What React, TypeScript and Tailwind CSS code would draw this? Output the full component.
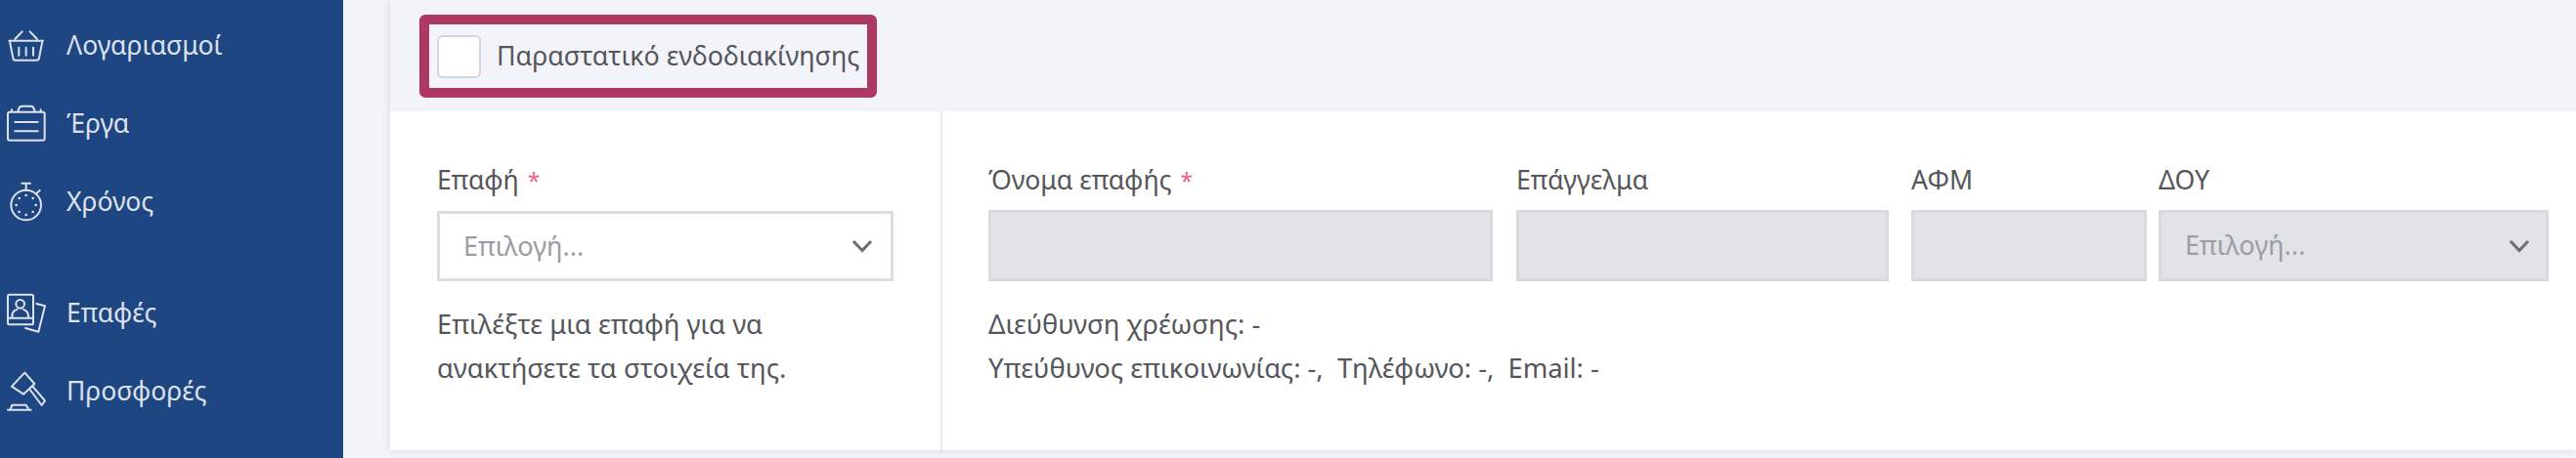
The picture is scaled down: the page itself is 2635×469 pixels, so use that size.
import React from "react";

const font = "font-['Noto_Sans','Open_Sans',sans-serif]";

const ChevronDown: React.FC = () => (
  <svg width="22" height="14" viewBox="0 0 22 14" fill="none" stroke="#6b6d72" strokeWidth="3">
    <path d="M2 2 L11 11.5 L20 2" />
  </svg>
);

const BasketIcon = () => (
  <svg className="w-[50px] h-[40px] overflow-visible" viewBox="0 78 150 120" fill="none" stroke="#dde2ec" strokeWidth="6" strokeLinecap="round" strokeLinejoin="round">
    <path d="M28 125 H132" />
    <path d="M30 127 L40 178 Q41 185 48 185 H112 Q119 185 120 178 L130 127" />
    <path d="M46 120 L68 97 M114 120 L92 97" />
    <path d="M58 146 V170 M80 146 V170 M102 146 V170" />
  </svg>
);

const BriefcaseIcon = () => (
  <svg className="w-[50px] h-[40px] overflow-visible" viewBox="0 321 150 120" fill="none" stroke="#dde2ec" strokeWidth="6" strokeLinecap="round" strokeLinejoin="round">
    <rect x="24" y="347" width="113" height="87" rx="6" />
    <path d="M55 346 L58 336 Q60 329 69 329 H93 Q102 329 104 336 L107 346" />
    <path d="M36 346 V340 M125 346 V340" />
    <path d="M46 378 H116 M46 406 H116" />
  </svg>
);

const StopwatchIcon = () => (
  <svg className="w-[50px] h-[40px] overflow-visible" viewBox="0 560 150 120" fill="none" stroke="#dde2ec" strokeWidth="6" strokeLinecap="round" strokeLinejoin="round">
    <circle cx="80" cy="632" r="46" />
    <path d="M67 565 H93 M80 565 V586 M110 598 L122 587" />
    <g fill="#dde2ec" stroke="none">
      <circle cx="80" cy="602" r="4" />
      <circle cx="101" cy="611" r="4" />
      <circle cx="110" cy="632" r="4" />
      <circle cx="101" cy="653" r="4" />
      <circle cx="80" cy="662" r="4" />
      <circle cx="59" cy="653" r="4" />
      <circle cx="50" cy="632" r="4" />
      <circle cx="59" cy="611" r="4" />
    </g>
  </svg>
);

const ContactsIcon = () => (
  <svg className="w-[50px] h-[40px] overflow-visible" viewBox="0 185 150 120" fill="none" stroke="#dde2ec" strokeWidth="6" strokeLinecap="round" strokeLinejoin="round">
    <rect x="24" y="190" width="78" height="92" rx="5" />
    <path d="M24 262 H102" />
    <circle cx="62" cy="219" r="13" />
    <path d="M37 260 Q36 240 52 236 M87 260 Q88 240 72 236" />
    <path d="M112 218 L138 225 L118 304 L78 293" />
  </svg>
);

const GavelIcon = () => (
  <svg className="w-[50px] h-[40px] overflow-visible" viewBox="0 427 150 120" fill="none" stroke="#dde2ec" strokeWidth="6" strokeLinecap="round" strokeLinejoin="round">
    <path d="M76 432 L106 466 L72 498 L36 474 Z" />
    <path d="M92 484 L128 532 L138 518 L100 474" />
    <path d="M24 546 H95 M32 545 L37 531 H80 L88 545" />
  </svg>
);

const TagIcon = () => (
  <svg className="w-[50px] h-[40px] overflow-visible" viewBox="0 605 150 120" fill="none" stroke="#dde2ec" strokeWidth="6" strokeLinecap="round" strokeLinejoin="round">
    <path d="M60 689 L96 672 L110 688" />
  </svg>
);

const NavItem: React.FC<{ icon: React.ReactNode; label?: string }> = ({ icon, label }) => (
  <div className="h-[80px] shrink-0 flex items-center">
    {icon}
    <span className="ml-[18px] text-[26.5px] text-[#dde2ec] leading-none">{label}</span>
  </div>
);

const Label: React.FC<{ text: string; required?: boolean }> = ({ text, required }) => (
  <label className="block h-[32px] leading-[32px] text-[26.6px] text-[#54565b] whitespace-nowrap">
    {text}
    {required && <span className="ml-[9px] text-[23px] text-[#e8678c]">*</span>}
  </label>
);

const Disabled: React.FC<{ className: string; text: string; required?: boolean; children?: React.ReactNode }> = ({ className, text, required, children }) => (
  <div className={`shrink-0 ${className}`}>
    <Label text={text} required={required} />
    <div className="mt-[15px] h-[73px] bg-[#e1e3e7] border-[3px] border-[#d9dade] flex items-center justify-between">
      {children}
    </div>
  </div>
);

export default function App() {
  return (
    <div className={`flex h-[469px] w-[2635px] overflow-hidden bg-[#f3f4f9] ${font}`}>
      <aside className="w-[351px] shrink-0 bg-[#1e4682] pt-[6px] overflow-hidden">
        <NavItem icon={<BasketIcon />} label="Λογαριασμοί" />
        <NavItem icon={<BriefcaseIcon />} label="Έργα" />
        <NavItem icon={<StopwatchIcon />} label="Χρόνος" />
        <div className="h-[34px]" />
        <NavItem icon={<ContactsIcon />} label="Επαφές" />
        <NavItem icon={<GavelIcon />} label="Προσφορές" />
        <NavItem icon={<TagIcon />} />
      </aside>

      <main className="flex-1 pl-[48px]">
        <div className="shadow-[0_0_8px_rgba(60,70,100,0.14)]">
          <div className="h-[114px] pl-[30px] pt-[15px]">
            <div className="w-[468px] h-[85px] border-[10px] border-[#ad3963] rounded-[6px] flex items-center pl-[8px]">
              <span className="w-[45px] h-[44px] bg-white border-2 border-[#d5d6da] rounded-[6px] shrink-0" />
              <span className="ml-[16px] text-[26.8px] text-[#54565b] whitespace-nowrap">Παραστατικό ενδοδιακίνησης</span>
            </div>
          </div>

          <div className="h-[347px] bg-white flex">
            <div className="w-[565px] shrink-0 border-r-2 border-[#ebecf0] pl-[48px] pt-[54px]">
              <Label text="Επαφή" required />
              <div className="mt-[16px] w-[467px] h-[72px] bg-white border-[3px] border-[#dcdde0] flex items-center justify-between pl-[24px] pr-[18px]">
                <span className="text-[27px] text-[#9a9da3]">Επιλογή...</span>
                <ChevronDown />
              </div>
              <p className="mt-[21px] text-[27.3px] leading-[45px] text-[#54565b]">
                Επιλέξτε μια επαφή για να
                <br />
                ανακτήσετε τα στοιχεία της.
              </p>
            </div>

            <div className="flex-1 pl-[47px] pt-[54px]">
              <div className="flex">
                <Disabled className="w-[516px]" text="Όνομα επαφής" required />
                <Disabled className="w-[381px] ml-[24px]" text="Επάγγελμα" />
                <Disabled className="w-[241px] ml-[23px]" text="ΑΦΜ" />
                <Disabled className="w-[399px] ml-[12px]" text="ΔΟΥ">
                  <span className="ml-[24px] text-[27px] text-[#9a9da3]">Επιλογή...</span>
                  <span className="mr-[16px] flex"><ChevronDown /></span>
                </Disabled>
              </div>
              <p className="mt-[21px] text-[27.3px] leading-[45px] text-[#54565b] whitespace-pre">
                Διεύθυνση χρέωσης: -
                <br />
                Υπεύθυνος επικοινωνίας: -,  Τηλέφωνο: -,  Email: -
              </p>
            </div>
          </div>
        </div>
      </main>
    </div>
  );
}
